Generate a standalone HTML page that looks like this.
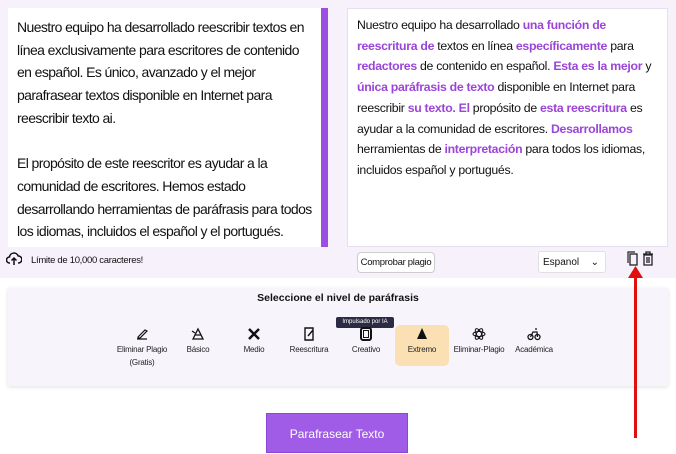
<!DOCTYPE html>
<html><head><meta charset="utf-8"><style>
*{margin:0;padding:0;box-sizing:border-box}
body{width:676px;height:450px;background:#fff;font-family:"Liberation Sans",Arial,sans-serif;position:relative;overflow:hidden;color:#111}
.top{position:absolute;left:0;top:0;width:676px;height:278px;background:#f6f1fb}
.lp{position:absolute;left:8px;top:8px;width:313px;height:239px;background:#fff;padding:8px 0 0 9px;font-size:14px;letter-spacing:-0.6px;line-height:22.7px;white-space:nowrap;overflow:hidden}
.bar{position:absolute;left:321px;top:8px;width:7px;height:239px;background:#9b4fe0}
.rp{position:absolute;left:347px;top:8px;width:321px;height:239px;background:#fff;border:1px solid #e6e0ee;padding:6px 6px 0 9px;font-size:12.3px;letter-spacing:-0.3px;line-height:20.7px}
.rp b{color:#9b45d8}
.lim{position:absolute;left:31px;top:255px;font-size:9.5px;letter-spacing:-0.3px;white-space:nowrap}
.btn{position:absolute;left:357px;top:252px;width:78px;height:21px;border:1px solid #ccc;border-radius:4px;background:#fff;font-size:9.5px;letter-spacing:-0.3px;text-align:center;line-height:19px;white-space:nowrap}
.sel{position:absolute;left:538px;top:251px;width:68px;height:22px;border:1px solid #e0e0e0;border-radius:3px;background:#fff;font-size:10px;line-height:21px;padding-left:4px}
.box{position:absolute;left:8px;top:288px;width:660px;height:98px;background:#f8f4fc;box-shadow:0 1px 4px rgba(0,0,0,.12)}
.ttl{position:absolute;left:0;width:676px;top:292px;text-align:center;font-size:10.5px;font-weight:bold}
.it{position:absolute;top:327px;font-size:8px;letter-spacing:-0.2px;text-align:center;line-height:13px;color:#222;white-space:nowrap}
.it svg{display:block;margin:0 auto 2px}
.tip{position:absolute;left:336px;top:317px;width:58px;height:11px;background:#2b2b44;color:#fff;font-size:6px;text-align:center;line-height:11px;border-radius:2px}
.ext{position:absolute;left:395px;top:325px;width:54px;height:41px;background:#fbe0b4;border-radius:5px}
.go{position:absolute;left:266px;top:413px;width:142px;height:40px;background:#a05ce6;color:#fff;border:1px solid #8d48d3;font-size:12px;text-align:center;line-height:40px}
.arr{position:absolute;left:634px;top:268px;width:3px;height:170px;background:#e01010}
</style></head><body>
<div class="top"></div>
<div class="lp">Nuestro equipo ha desarrollado reescribir textos en<br>línea exclusivamente para escritores de contenido<br>en español. Es único, avanzado y el mejor<br>parafrasear textos disponible en Internet para<br>reescribir texto ai.<br><br>El propósito de este reescritor es ayudar a la<br>comunidad de escritores. Hemos estado<br>desarrollando herramientas de paráfrasis para todos<br>los idiomas, incluidos el español y el portugués.</div>
<div class="bar"></div>
<div class="rp">Nuestro equipo ha desarrollado <b>una función de reescritura de</b> textos en línea <b>específicamente</b> para <b>redactores</b> de contenido en español. <b>Esta es la mejor</b> y <b>única paráfrasis de texto</b> disponible en Internet para reescribir <b>su texto. El</b> propósito de <b>esta reescritura</b> es ayudar a la comunidad de escritores. <b>Desarrollamos</b> herramientas de <b>interpretación</b> para todos los idiomas, incluidos español y portugués.</div>
<svg style="position:absolute;left:6px;top:252px" width="16" height="14" viewBox="0 0 16 14"><path d="M4 11H3.5a3 3 0 0 1 0-6 4.5 4.5 0 0 1 8.7-1A3.5 3.5 0 0 1 12.5 11H12M8 13V6M5.5 8.5L8 6l2.5 2.5" fill="none" stroke="#111" stroke-width="1.5"/></svg>
<div class="lim">Límite de 10,000 caracteres!</div>
<div class="btn">Comprobar plagio</div>
<div class="sel">Espanol<span style="position:absolute;right:6px;top:0">⌄</span></div>
<svg style="position:absolute;left:627px;top:251px" width="30" height="16" viewBox="0 0 30 16"><rect x="3" y="3" width="7" height="11" fill="none" stroke="#222" stroke-width="1.3"/><path d="M1 12V1h7" fill="none" stroke="#222" stroke-width="1.2"/><path d="M16 3h10M19 3V1h4v2M17 4h8v10h-8zM20 6v6M22 6v6" fill="none" stroke="#222" stroke-width="1.3"/></svg>
<div class="box"></div>
<div class="ttl">Seleccione el nivel de paráfrasis</div>
<div class="tip">Impulsado por IA</div>
<div class="ext"></div>
<div class="it" style="left:112px;width:60px">
<svg width="14" height="14" viewBox="0 0 14 14"><path d="M2 12h10M3 10l7-7 2 1-7 7H3z" fill="none" stroke="#111" stroke-width="1.2"/></svg>Eliminar Plagio<br>(Gratis)</div>
<div class="it" style="left:178px;width:40px"><svg width="14" height="14" viewBox="0 0 14 14"><path d="M2 12L7 2l5 10zM4 8h6M1 4l3 2" fill="none" stroke="#111" stroke-width="1.3"/></svg>Básico</div>
<div class="it" style="left:234px;width:40px"><svg width="14" height="14" viewBox="0 0 14 14"><path d="M2 2l10 10M12 2L2 12" stroke="#111" stroke-width="2.5"/></svg>Medio</div>
<div class="it" style="left:284px;width:50px"><svg width="14" height="14" viewBox="0 0 14 14"><path d="M3 1h8v12H3zM6 9l5-6" fill="none" stroke="#111" stroke-width="1.4"/></svg>Reescritura</div>
<div class="it" style="left:346px;width:40px"><svg width="14" height="14" viewBox="0 0 14 14"><rect x="2" y="1" width="10" height="12" rx="2" fill="none" stroke="#111" stroke-width="2"/><rect x="4.5" y="3.5" width="5" height="7" fill="none" stroke="#111" stroke-width="1"/></svg>Creativo</div>
<div class="it" style="left:402px;width:40px"><svg width="14" height="14" viewBox="0 0 14 14"><path d="M7 1L2 12h10z" fill="#111"/></svg>Extremo</div>
<div class="it" style="left:452px;width:54px"><svg width="14" height="14" viewBox="0 0 14 14"><ellipse cx="7" cy="7" rx="6" ry="2.5" fill="none" stroke="#111"/><ellipse cx="7" cy="7" rx="6" ry="2.5" transform="rotate(60 7 7)" fill="none" stroke="#111"/><ellipse cx="7" cy="7" rx="6" ry="2.5" transform="rotate(-60 7 7)" fill="none" stroke="#111"/></svg>Eliminar-Plagio</div>
<div class="it" style="left:512px;width:44px"><svg width="14" height="14" viewBox="0 0 14 14"><circle cx="3.5" cy="10" r="2.5" fill="none" stroke="#111" stroke-width="1.3"/><circle cx="10.5" cy="10" r="2.5" fill="none" stroke="#111" stroke-width="1.3"/><path d="M3.5 10L6 5h4l.5 5M8 2h2" fill="none" stroke="#111" stroke-width="1.3"/></svg>Académica</div>
<div class="go">Parafrasear Texto</div>
<div class="arr"></div>
<svg style="position:absolute;left:628px;top:266px" width="15" height="12" viewBox="0 0 15 12"><path d="M7.5 0L15 12H0z" fill="#e01010"/></svg>
</body></html>
